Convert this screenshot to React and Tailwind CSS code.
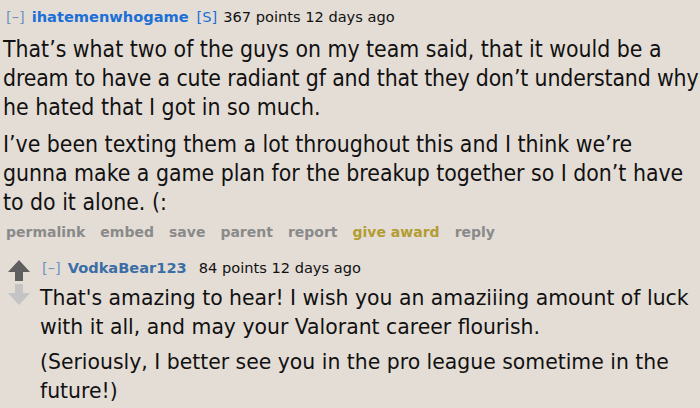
const Arrow = ({ down, color }) => (
  <svg width="22" height="21" viewBox="0 0 22 21" className={down ? 'rotate-180' : ''}>
    <path d="M11 0 L22 12 L15 12 L15 21 L7 21 L7 12 L0 12 Z" fill={color} />
  </svg>
);

export default function App() {
  const verdana = { fontFamily: '"DejaVu Sans", Verdana, sans-serif' };
  const cond = { fontFamily: '"DejaVu Sans Condensed", "DejaVu Sans", sans-serif' };

  return (
    <div className="w-[700px] h-[408px] overflow-hidden bg-[#e4ddd6] text-[#111]">
      {/* first comment */}
      <div className="pl-[6px] pt-[6px]">
        <div className="flex items-center text-[14.6px] leading-[22px]" style={verdana}>
          <span className="text-[#6f94c0]">[–]</span>
          <span className="font-bold text-[#1b6fd6] ml-[7px]">ihatemenwhogame</span>
          <span className="text-[#1b6fd6] ml-[8px]">[S]</span>
          <span className="ml-[6px]">367 points 12 days ago</span>
        </div>
        <div className="text-[22.8px] leading-[29px] pt-[6.5px] -ml-[3px] whitespace-nowrap" style={cond}>
          <p>
            That’s what two of the guys on my team said, that it would be a<br />
            <span className="tracking-[-0.14px]">dream to have a cute radiant gf and that they don’t understand why</span><br />
            he hated that I got in so much.
          </p>
          <p className="mt-[8px]">
            I’ve been texting them a lot throughout this and I think we’re<br />
            gunna make a game plan for the breakup together so I don’t have<br />
            to do it alone. (:
          </p>
        </div>
        <div className="flex gap-[15px] font-bold text-[14px] leading-[22px] text-[#8a8a8a] mt-[4.5px]" style={verdana}>
          <span>permalink</span>
          <span>embed</span>
          <span>save</span>
          <span>parent</span>
          <span>report</span>
          <span className="text-[#b39c32]">give award</span>
          <span>reply</span>
        </div>
      </div>

      {/* reply */}
      <div className="flex mt-[14px] pl-[8px]">
        <div className="flex flex-col items-center w-[22px] pt-[3px] gap-[3px]">
          <Arrow color="#5f5f5f" />
          <Arrow down color="#c4c4c4" />
        </div>
        <div className="pl-[10px]">
          <div className="flex items-center text-[14.6px] leading-[22px] pl-[2px]" style={verdana}>
            <span className="text-[#6f94c0]">[–]</span>
            <span className="font-bold text-[#3a6ea5] ml-[7px]">VodkaBear123</span>
            <span className="ml-[12px]">84 points 12 days ago</span>
          </div>
          <div className="text-[20.4px] leading-[29px] pt-[4.5px]" style={verdana}>
            <p>That's amazing to hear! I wish you an amaziiing amount of luck with it all, and may your Valorant career flourish.</p>
            <p className="mt-[6px]">(Seriously, I better see you in the pro league sometime in the future!)</p>
          </div>
        </div>
      </div>
    </div>
  );
}
